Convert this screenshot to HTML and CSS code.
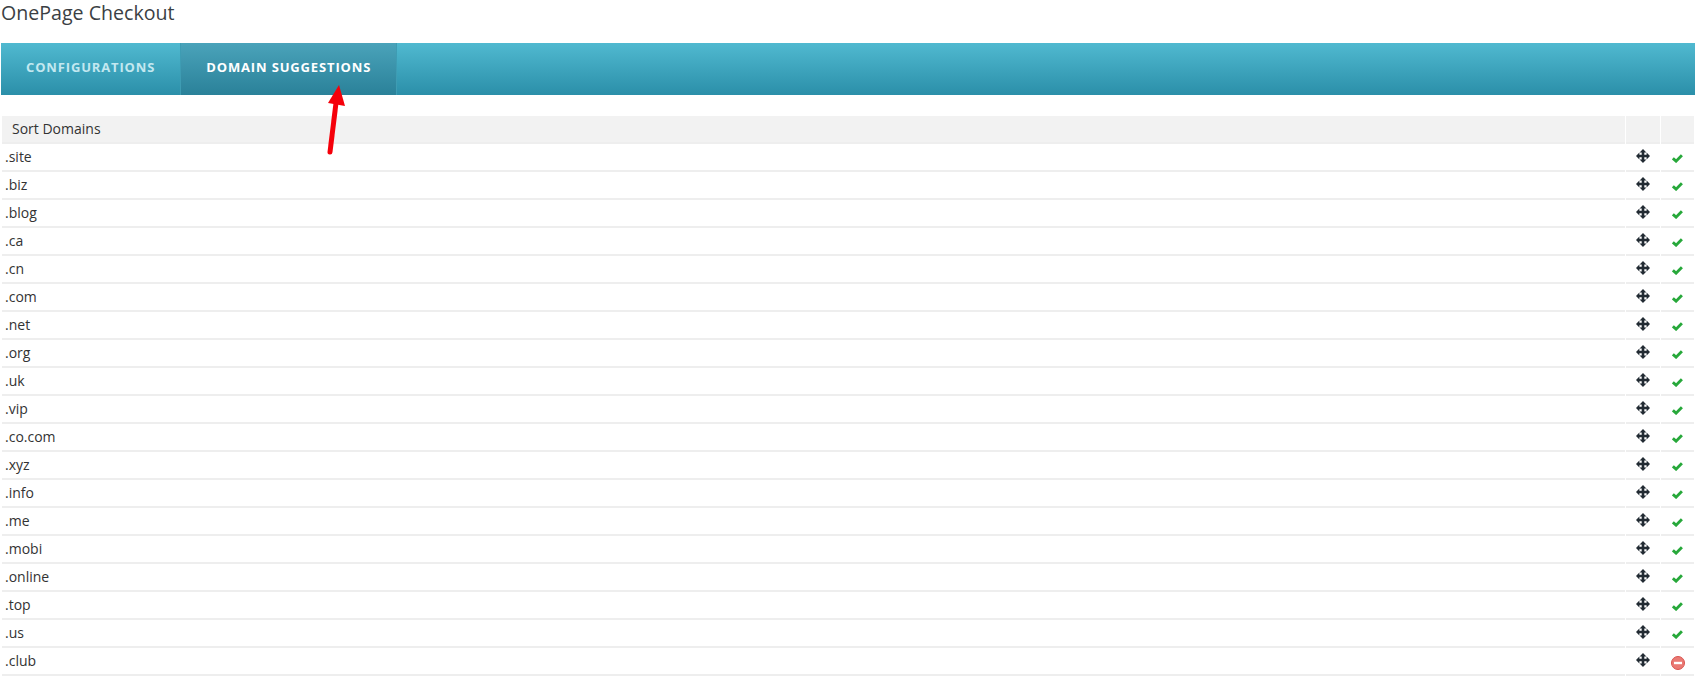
FILE: index.html
```html
<!DOCTYPE html>
<html lang="en">
<head>
  <meta charset="UTF-8">
  <title>OnePage Checkout</title>
  <link rel="stylesheet" href="styles.css">
</head>
<body>

  <svg width="0" height="0" class="icon-defs">
    <symbol id="move" viewBox="0 0 14 14">
      <path d="M7 0 10.4 3.4H8.3V5.7H10.6V3.6L14 7 10.6 10.4V8.3H8.3V10.6H10.4L7 14 3.6 10.6H5.7V8.3H3.4V10.4L0 7 3.4 3.6V5.7H5.7V3.4H3.6Z" fill="#222b33"/>
    </symbol>
    <symbol id="check" viewBox="0 0 10 8">
      <path d="M.8 3.8 3.7 6.4 9 1" fill="none" stroke="#27a83a" stroke-width="2.6"/>
    </symbol>
    <symbol id="minus" viewBox="0 0 14 14">
      <circle cx="7" cy="7" r="6.5" fill="#ea7a74" stroke="#d9534f"/>
      <rect x="3" y="5.8" width="8" height="2.4" fill="#fff"/>
    </symbol>
  </svg>

  <h1 class="page-title">OnePage Checkout</h1>

  <div class="tabs">
    <div class="tab">Configurations</div>
    <div class="tab tab-active">Domain Suggestions</div>
  </div>

  <div class="grid">
    <div class="row head">
      <div class="cell name">Sort Domains</div>
      <div class="cell move"></div>
      <div class="cell state"></div>
    </div>
    <div class="row"><div class="cell name">.site</div><div class="cell move"><svg class="ico-move"><use href="#move"/></svg></div><div class="cell state"><svg class="ico-check"><use href="#check"/></svg></div></div>
    <div class="row"><div class="cell name">.biz</div><div class="cell move"><svg class="ico-move"><use href="#move"/></svg></div><div class="cell state"><svg class="ico-check"><use href="#check"/></svg></div></div>
    <div class="row"><div class="cell name">.blog</div><div class="cell move"><svg class="ico-move"><use href="#move"/></svg></div><div class="cell state"><svg class="ico-check"><use href="#check"/></svg></div></div>
    <div class="row"><div class="cell name">.ca</div><div class="cell move"><svg class="ico-move"><use href="#move"/></svg></div><div class="cell state"><svg class="ico-check"><use href="#check"/></svg></div></div>
    <div class="row"><div class="cell name">.cn</div><div class="cell move"><svg class="ico-move"><use href="#move"/></svg></div><div class="cell state"><svg class="ico-check"><use href="#check"/></svg></div></div>
    <div class="row"><div class="cell name">.com</div><div class="cell move"><svg class="ico-move"><use href="#move"/></svg></div><div class="cell state"><svg class="ico-check"><use href="#check"/></svg></div></div>
    <div class="row"><div class="cell name">.net</div><div class="cell move"><svg class="ico-move"><use href="#move"/></svg></div><div class="cell state"><svg class="ico-check"><use href="#check"/></svg></div></div>
    <div class="row"><div class="cell name">.org</div><div class="cell move"><svg class="ico-move"><use href="#move"/></svg></div><div class="cell state"><svg class="ico-check"><use href="#check"/></svg></div></div>
    <div class="row"><div class="cell name">.uk</div><div class="cell move"><svg class="ico-move"><use href="#move"/></svg></div><div class="cell state"><svg class="ico-check"><use href="#check"/></svg></div></div>
    <div class="row"><div class="cell name">.vip</div><div class="cell move"><svg class="ico-move"><use href="#move"/></svg></div><div class="cell state"><svg class="ico-check"><use href="#check"/></svg></div></div>
    <div class="row"><div class="cell name">.co.com</div><div class="cell move"><svg class="ico-move"><use href="#move"/></svg></div><div class="cell state"><svg class="ico-check"><use href="#check"/></svg></div></div>
    <div class="row"><div class="cell name">.xyz</div><div class="cell move"><svg class="ico-move"><use href="#move"/></svg></div><div class="cell state"><svg class="ico-check"><use href="#check"/></svg></div></div>
    <div class="row"><div class="cell name">.info</div><div class="cell move"><svg class="ico-move"><use href="#move"/></svg></div><div class="cell state"><svg class="ico-check"><use href="#check"/></svg></div></div>
    <div class="row"><div class="cell name">.me</div><div class="cell move"><svg class="ico-move"><use href="#move"/></svg></div><div class="cell state"><svg class="ico-check"><use href="#check"/></svg></div></div>
    <div class="row"><div class="cell name">.mobi</div><div class="cell move"><svg class="ico-move"><use href="#move"/></svg></div><div class="cell state"><svg class="ico-check"><use href="#check"/></svg></div></div>
    <div class="row"><div class="cell name">.online</div><div class="cell move"><svg class="ico-move"><use href="#move"/></svg></div><div class="cell state"><svg class="ico-check"><use href="#check"/></svg></div></div>
    <div class="row"><div class="cell name">.top</div><div class="cell move"><svg class="ico-move"><use href="#move"/></svg></div><div class="cell state"><svg class="ico-check"><use href="#check"/></svg></div></div>
    <div class="row"><div class="cell name">.us</div><div class="cell move"><svg class="ico-move"><use href="#move"/></svg></div><div class="cell state"><svg class="ico-check"><use href="#check"/></svg></div></div>
    <div class="row"><div class="cell name">.club</div><div class="cell move"><svg class="ico-move"><use href="#move"/></svg></div><div class="cell state"><svg class="ico-minus"><use href="#minus"/></svg></div></div>
  </div>

  <!-- annotation arrow drawn over the page -->
  <svg class="arrow" width="40" height="80" viewBox="0 0 40 80">
    <path d="M8 69 14 20" stroke="#f5000a" stroke-width="5" stroke-linecap="round" fill="none"/>
    <path d="M17 2 6 20 23 23Z" fill="#f5000a"/>
  </svg>

</body>
</html>
```

FILE: styles.css
```css
html {
  height: 100%;
  overflow: hidden;
}

body {
  background-color: white;
  color: #333;
  font-family: "Open Sans", sans-serif;
  font-size: 14px;
  margin: 0;
  padding: 0 13px 0 1px;
}

.icon-defs {
  position: absolute;
}

.page-title {
  color: #3b3f44;
  font-size: 19.6px;
  font-weight: 400;
  line-height: 26px;
  margin: 0 0 17px;
}

.tabs {
  background: linear-gradient(#50b9d0, #2b8fa9);
  display: flex;
  height: 52px;
}

.tab {
  align-items: center;
  color: #c3e8f0;
  display: flex;
  font-size: 13px;
  font-weight: 700;
  letter-spacing: 0.85px;
  padding: 0 25px 4px 25px;
  text-transform: uppercase;
}

.tab-active {
  background: linear-gradient(#4aa3ba, #2a8199);
  border-right: 1px solid #3e9cb3;
  border-left: 1px solid #3e9cb3;
  color: white;
}

.grid {
  margin: 21px 1px 0 1px;
}

.row {
  display: flex;
  height: 28px;
}

.cell {
  align-items: center;
  border-bottom: 2px solid #eeeeee;
  display: flex;
  padding-bottom: 1px;
}

.name {
  flex: 1;
  margin-right: 1px;
  padding-left: 3px;
}

.move {
  justify-content: center;
  margin-right: 1px;
  padding-bottom: 3px;
  width: 34px;
}

.state {
  justify-content: center;
  padding-top: 4px;
  width: 33px;
}

.head .cell {
  background-color: #f2f2f2;
}

.head .name {
  padding-left: 10px;
}

.ico-move {
  height: 14px;
  width: 14px;
}

.ico-check {
  height: 9px;
  width: 11px;
}

.ico-minus {
  height: 14px;
  width: 14px;
}

.arrow {
  left: 322px;
  position: absolute;
  top: 83px;
}
```
